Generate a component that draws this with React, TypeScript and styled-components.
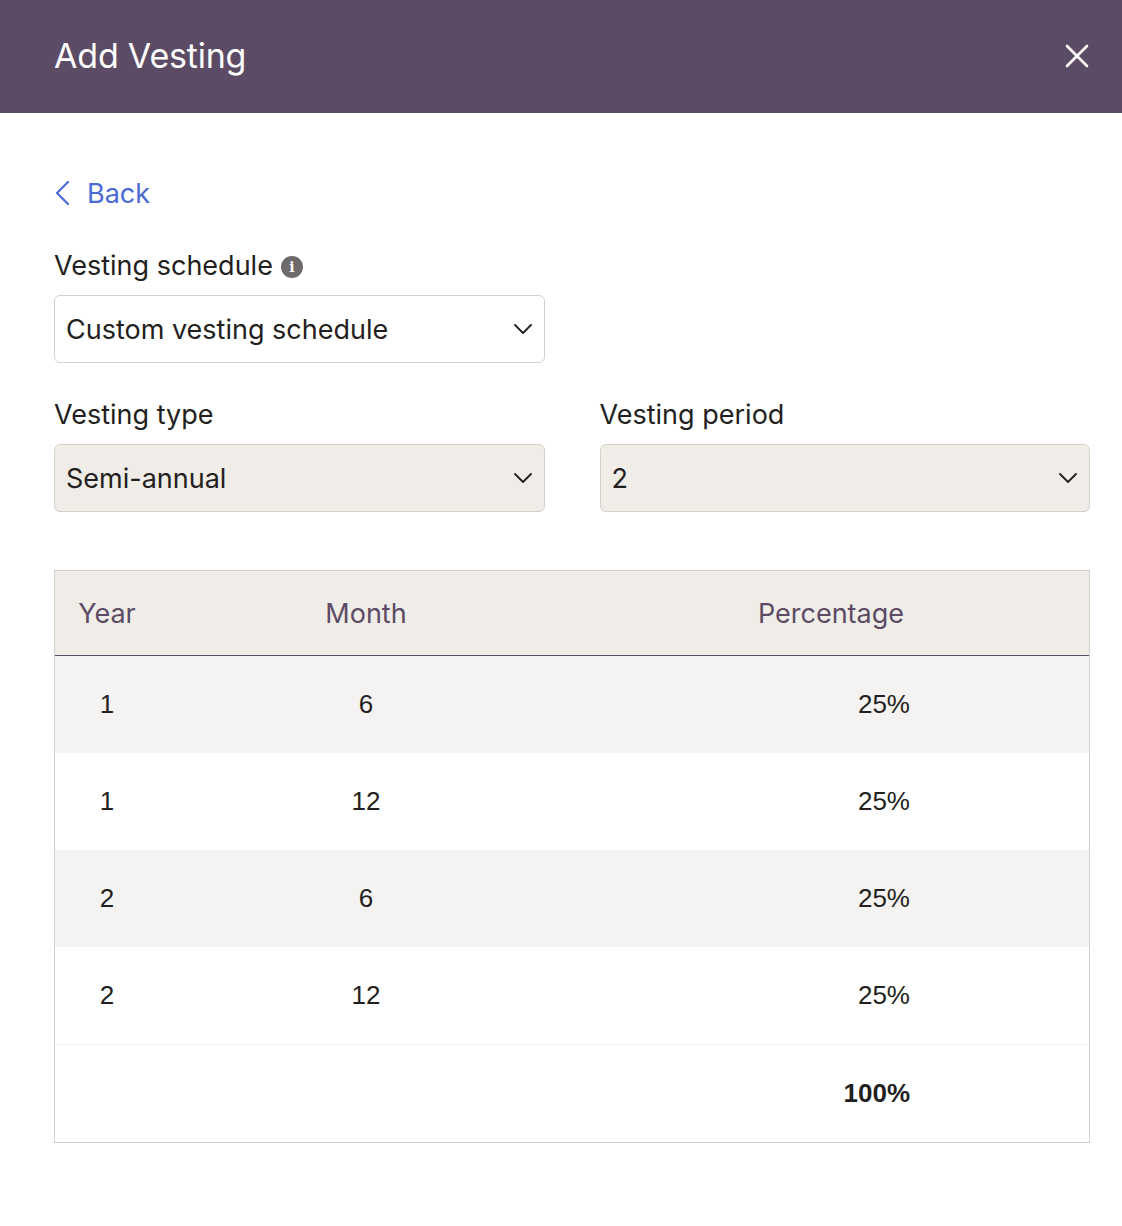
import React from 'react';
import styled, { createGlobalStyle } from 'styled-components';

const GlobalStyle = createGlobalStyle`
  body {
    margin: 0;
    background: #ffffff;
    font-family: Inter, 'Noto Sans', sans-serif;
    color: #231f20;
  }
`;

const rows = [
  { year: 1, month: 6, pct: '25%' },
  { year: 1, month: 12, pct: '25%' },
  { year: 2, month: 6, pct: '25%' },
  { year: 2, month: 12, pct: '25%' },
];

const Chevron = () => (
  <svg width="18" height="10" viewBox="0 0 18 10" fill="none">
    <path d="M1 1l8 8 8-8" stroke="#231f20" strokeWidth="1.8" strokeLinecap="round" strokeLinejoin="round" />
  </svg>
);

export default function App() {
  return (
    <>
      <GlobalStyle />
      <Header>
        <Title>Add Vesting</Title>
        <CloseButton aria-label="Close">
          <svg width="24" height="24" viewBox="0 0 24 24" fill="none">
            <path d="M2 2l20 20M22 2L2 22" stroke="#ffffff" strokeWidth="2.6" strokeLinecap="round" />
          </svg>
        </CloseButton>
      </Header>

      <Body>
        <BackLink href="#">
          <svg width="16" height="26" viewBox="0 0 16 26" fill="none">
            <path d="M14 2L3 13l11 11" stroke="#4a6bd6" strokeWidth="2.2" strokeLinecap="round" strokeLinejoin="round" />
          </svg>
          Back
        </BackLink>

        <Field>
          <Label>
            Vesting schedule
            <InfoDot>i</InfoDot>
          </Label>
          <Select filled={false}>
            <span>Custom vesting schedule</span>
            <Chevron />
          </Select>
        </Field>

        <FieldRow>
          <Field>
            <Label>Vesting type</Label>
            <Select filled>
              <span>Semi-annual</span>
              <Chevron />
            </Select>
          </Field>
          <Field>
            <Label>Vesting period</Label>
            <Select filled>
              <span>2</span>
              <Chevron />
            </Select>
          </Field>
        </FieldRow>

        <Table>
          <HeadRow>
            <HeadCell>Year</HeadCell>
            <HeadCell>Month</HeadCell>
            <HeadCell>Percentage</HeadCell>
          </HeadRow>
          {rows.map((r, i) => (
            <Row key={i} striped={i % 2 === 0}>
              <Cell>{r.year}</Cell>
              <Cell>{r.month}</Cell>
              <PctCell>{r.pct}</PctCell>
            </Row>
          ))}
          <TotalRow>
            <Cell />
            <Cell />
            <PctCell bold>100%</PctCell>
          </TotalRow>
        </Table>
      </Body>
    </>
  );
}

const Header = styled.header`
  height: 113px;
  background: #5c4b64;
  display: flex;
  align-items: center;
  justify-content: space-between;
  padding: 0 33px 0 54px;
  box-sizing: border-box;
`;

const Title = styled.h1`
  margin: 0;
  color: #ffffff;
  font-size: 34px;
  font-weight: 400;
  letter-spacing: -0.2px;
  padding-bottom: 2px;
`;

const CloseButton = styled.button`
  background: none;
  border: none;
  padding: 0;
  cursor: pointer;
  display: flex;
  margin-bottom: 2px;
`;

const Body = styled.main`
  padding: 65px 32px 60px 54px;
  display: flex;
  flex-direction: column;
`;

const BackLink = styled.a`
  display: flex;
  align-items: center;
  gap: 17px;
  height: 30px;
  color: #4a6bd6;
  text-decoration: none;
  font-size: 27px;
  margin-bottom: 43px;
  align-self: flex-start;
`;

const FieldRow = styled.div`
  display: grid;
  grid-template-columns: 1fr 1fr;
  gap: 55px;
  margin-top: 37px;
`;

const Field = styled.div`
  display: flex;
  flex-direction: column;
  gap: 14px;
  width: 100%;
  max-width: 491px;
  ${FieldRow} & {
    max-width: none;
  }
`;

const Label = styled.label`
  display: flex;
  align-items: center;
  gap: 8px;
  font-size: 27px;
  line-height: 30px;
`;

const InfoDot = styled.span`
  width: 22px;
  height: 22px;
  border-radius: 50%;
  background: #6e6a6b;
  color: #ffffff;
  font-family: 'DejaVu Serif', serif;
  font-weight: 700;
  font-size: 14px;
  line-height: 22px;
  text-align: center;
  margin-top: 2px;
`;

const Select = styled.div<{ filled: boolean }>`
  height: 68px;
  box-sizing: border-box;
  border: 1px solid #d6d0c8;
  border-radius: 6px;
  background: ${(p) => (p.filled ? '#f0ece7' : '#ffffff')};
  display: flex;
  align-items: center;
  justify-content: space-between;
  padding: 0 12px 0 11px;
  font-size: 27px;
`;

const Table = styled.div`
  margin-top: 58px;
  border: 1px solid #d6d0c8;
  display: flex;
  flex-direction: column;
`;

const HeadRow = styled.div`
  display: grid;
  grid-template-columns: 104px 414px 1fr;
  height: 84px;
  align-items: center;
  background: #f0ece7;
  border-bottom: 1px solid #5c4b64;
`;

const HeadCell = styled.div`
  text-align: center;
  color: #5c4b64;
  font-size: 27px;
`;

const Row = styled.div<{ striped: boolean }>`
  display: grid;
  grid-template-columns: 104px 414px 1fr;
  height: 97px;
  align-items: center;
  background: ${(p) => (p.striped ? '#f5f3f1' : '#ffffff')};
`;

const TotalRow = styled(Row).attrs({ striped: false })`
  border-top: 1px solid #efefef;
`;

const Cell = styled.div`
  text-align: center;
  font-family: 'Liberation Sans', Arial, sans-serif;
  font-size: 26px;
  color: #231f20;
`;

const PctCell = styled(Cell)<{ bold?: boolean }>`
  text-align: right;
  padding-right: 179px;
  font-weight: ${(p) => (p.bold ? 700 : 400)};
`;
